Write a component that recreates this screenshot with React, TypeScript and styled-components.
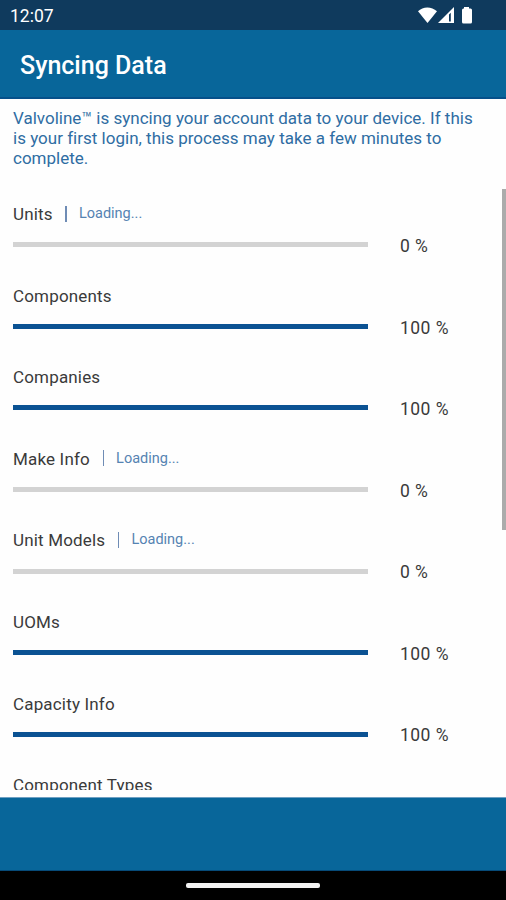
import React from "react";
import styled, { createGlobalStyle } from "styled-components";

const GlobalStyle = createGlobalStyle`
  * { box-sizing: border-box; }
  body { margin: 0; background: #fefefe; font-family: Roboto, "Liberation Sans", sans-serif; }
`;

const Screen = styled.div`
  display: flex;
  flex-direction: column;
  width: 506px;
  height: 900px;
  overflow: hidden;
  background: #fefefe;
`;

const StatusBar = styled.div`
  flex: none;
  display: flex;
  align-items: center;
  justify-content: space-between;
  height: 30px;
  padding: 0 32px 0 10px;
  background: #0f3a5d;
  color: #fff;
`;

const Clock = styled.span`
  font-size: 17.5px;
  line-height: 20px;
  letter-spacing: 0;
  padding-top: 2px;
`;

const StatusIcons = styled.svg`
  display: block;
  width: 56px;
  height: 18px;
`;

const Header = styled.header`
  flex: none;
  display: flex;
  align-items: center;
  height: 69px;
  padding: 5px 20px 0;
  background: #08669a;
  border-bottom: 2px solid #06508a;
`;

const Title = styled.h1`
  margin: 0;
  color: #fff;
  font-size: 25px;
  line-height: 30px;
  font-weight: 500;
`;

const Intro = styled.p`
  flex: none;
  height: 89px;
  margin: 0;
  padding: 8.5px 24px 0 13px;
  color: #2f6da3;
  font-size: 17px;
  line-height: 20.2px;
  letter-spacing: 0.01px;
`;

const IntroLine = styled.span`
  display: block;
  white-space: nowrap;
`;

const ListArea = styled.div`
  flex: none;
  display: flex;
  justify-content: space-between;
  height: 602px;
  overflow: hidden;
`;

const Rows = styled.div`
  width: 470px;
  padding-left: 13px;
`;

const Row = styled.div`
  height: 81.57px;
  padding-top: 16.2px;
`;

const LabelLine = styled.div`
  display: flex;
  align-items: center;
  height: 20px;
`;

const Label = styled.span`
  color: #3a3a3a;
  font-size: 17px;
  line-height: 20px;
  letter-spacing: 0.17px;
  white-space: nowrap;
`;

const Divider = styled.span`
  width: 1.5px;
  height: 16px;
  margin: -1px 12px 0 12.7px;
  background: #6f8cb5;
`;

const Loading = styled.span`
  color: #5583b2;
  font-size: 14.5px;
  line-height: 20px;
`;

const ProgressLine = styled.div`
  display: flex;
  align-items: center;
  height: 20px;
  margin-top: 10.6px;
`;

const Track = styled.div`
  width: 355px;
  height: 5px;
  background: #d3d3d3;
`;

const Fill = styled.div`
  height: 5px;
  background: #0b5293;
`;

const Percent = styled.span`
  margin-left: 32px;
  padding-top: 2.6px;
  color: #3a3a3a;
  font-size: 17.5px;
  line-height: 20px;
  letter-spacing: 0.45px;
  white-space: nowrap;
`;

const ScrollThumb = styled.div`
  width: 4.5px;
  height: 341px;
  margin-top: 1px;
  background: #ababab;
`;

const Footer = styled.footer`
  flex: none;
  height: 74px;
  margin-top: 7px;
  background: #08669a;
  border-top: 1px solid #6fa0c2;
  border-bottom: 1px solid #064a78;
`;

const NavigationBar = styled.div`
  flex: 1;
  display: flex;
  justify-content: center;
  padding-top: 12px;
  background: #000;
`;

const HomeHandle = styled.div`
  width: 134px;
  height: 5px;
  border-radius: 2px;
  background: #f2f2f2;
`;

const items: { name: string; progress?: number }[] = [
  { name: "Units", progress: 0 },
  { name: "Components", progress: 100 },
  { name: "Companies", progress: 100 },
  { name: "Make Info", progress: 0 },
  { name: "Unit Models", progress: 0 },
  { name: "UOMs", progress: 100 },
  { name: "Capacity Info", progress: 100 },
  { name: "Component Types" },
];

export default function App() {
  return (
    <>
      <GlobalStyle />
      <Screen>
        <StatusBar>
          <Clock>12:07</Clock>
          <StatusIcons viewBox="0 0 56 18" fill="#fff">
            <path d="M0 5.3C5 .2 13.5 .2 19 5.3L9.500 17Z" />
            <path fillRule="evenodd" d="M20 17 36 1v16ZM31 8.5v7h1.8V6.7Z" />
            <path d="M46 1h5V2.500h1.500q1.500 0 1.500 1.500V16q0 1.500-1.500 1.500h-7Q44 17.500 44 16V4Q44 2.500 45.500 2.500H46Z" />
          </StatusIcons>
        </StatusBar>
        <Header><Title>Syncing Data</Title></Header>
        <Intro>
          <IntroLine>Valvoline™ is syncing your account data to your device. If this</IntroLine>
          <IntroLine>is your first login, this process may take a few minutes to</IntroLine>
          <IntroLine>complete.</IntroLine>
        </Intro>
        <ListArea>
          <Rows>
            {items.map(({ name, progress }) => (
              <Row key={name}>
                <LabelLine>
                  <Label>{name}</Label>
                  {progress === 0 && (
                    <><Divider /><Loading>Loading...</Loading></>
                  )}
                </LabelLine>
                {progress !== undefined && (
                  <ProgressLine>
                    <Track><Fill style={{ width: `${progress}%` }} /></Track>
                    <Percent>{progress} %</Percent>
                  </ProgressLine>
                )}
              </Row>
            ))}
          </Rows>
          <ScrollThumb />
        </ListArea>
        <Footer />
        <NavigationBar><HomeHandle /></NavigationBar>
      </Screen>
    </>
  );
}
